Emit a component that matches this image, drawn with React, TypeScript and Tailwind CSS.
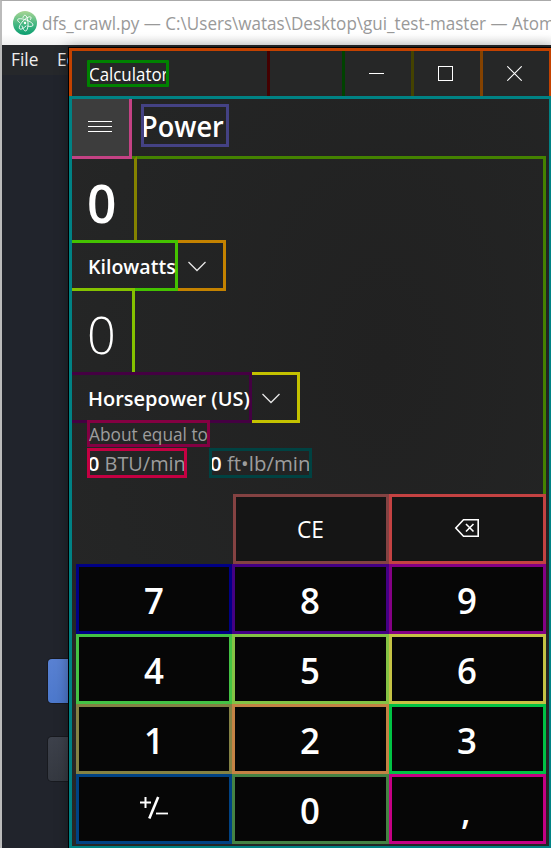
import React from "react";

type TextProps = { children: React.ReactNode; className?: string };

const Label = ({ children, className = "" }: TextProps) => (
  <span className={`inline-block origin-left whitespace-pre ${className}`}>{children}</span>
);

const Chevron = () => (
  <svg width="19" height="12" viewBox="0 0 19 12" fill="none" stroke="#e6e6e6" strokeWidth="1.3">
    <path d="M1.5 2 10 10.5 18.5 2" />
  </svg>
);

const keys = [
  { label: "7", frame: "border-[#000084]" },
  { label: "8", frame: "border-[#440084]" },
  { label: "9", frame: "border-[#840084]" },
  { label: "4", frame: "border-[#44c244]" },
  { label: "5", frame: "border-[#84c244]" },
  { label: "6", frame: "border-[#c4c244]" },
  { label: "1", frame: "border-[#848244]" },
  { label: "2", frame: "border-[#c48244]" },
  { label: "3", frame: "border-[#00c244]" },
  { label: "±", frame: "border-[#004284]" },
  { label: "0", frame: "border-[#448244]" },
  { label: ",", frame: "border-[#c40084] pr-[3px]" },
];

const PlusMinus = () => (
  <svg className="mb-1" width="30" height="24" viewBox="0 0 30 24" fill="none" stroke="#fff">
    <path d="M1 6.5H12M6.5 1V12" strokeWidth="2" />
    <path d="M10.3 22.5 19.2 1" strokeWidth="2.6" />
    <path d="M17 17.5H29" strokeWidth="1.8" />
  </svg>
);

const AtomLogo = () => (
  <svg className="shrink-0" width="24" height="24" viewBox="0 0 24 24" fill="none">
    <defs>
      <linearGradient id="atom" x1="0" y1="0" x2="0" y2="1">
        <stop offset="0" stopColor="#a9d694" />
        <stop offset="0.55" stopColor="#45b782" />
        <stop offset="1" stopColor="#0a9e70" />
      </linearGradient>
    </defs>
    <circle cx="12" cy="12" r="12" fill="url(#atom)" />
    <g stroke="#fff" strokeWidth="0.9" strokeLinecap="round">
      <path d="M6.5 11.5C3.5 9.5 4 7.5 7.5 7.7 12 8 20 11 20 14 20 15.5 17.500 15.800 15 15.200" />
      <path d="M10 6.500C10.500 4 12.500 3.200 13.800 6 15.500 9.500 15.500 17 13.500 19.500 12 21 10 18.500 9 15" />
      <path d="M17.500 8.500C19 6 17.500 5 15 6.300 10.500 8.500 5.500 14.500 6.300 17.300 7 19.500 10.500 17.500 13 15" />
    </g>
    <circle cx="12" cy="12" r="1.2" fill="#fff" />
  </svg>
);

function TitleBar() {
  return (
    <div className="flex h-12 border-x-[3px] border-t-[3px] border-[#c44200] bg-[#262727]">
      <div className="w-[195px] shrink-0 pt-[9px] pl-[15px]">
        <div className="h-[27px] w-[82px] overflow-hidden rounded-[1px] border-[3px] border-[#008200]">
          <Label className="ml-[-1px] text-[17.5px] leading-[19px] scale-x-[0.965]">Calculator</Label>
        </div>
      </div>
      <div className="w-[75px] shrink-0 border-l-[3px] border-[#440000]" />
      <div className="flex w-[69px] shrink-0 items-center justify-center border-l-[3px] border-[#004200] pr-[3px]">
        <div className="h-px w-[15px] bg-white" />
      </div>
      <div className="flex w-[69px] shrink-0 items-center justify-center border-l-[3px] border-[#444200] pr-[3px]">
        <div className="size-[15px] border border-white" />
      </div>
      <div className="flex w-[69px] shrink-0 items-center justify-center border-l-[3px] border-[#844200] pr-[3px]">
        <svg width="15" height="15" viewBox="0 0 15 15" stroke="#fff" strokeWidth="1.1">
          <path d="M.3.3 14.7 14.7M14.7.3.3 14.7" />
        </svg>
      </div>
    </div>
  );
}

function Header() {
  return (
    <div className="flex h-[57px]">
      <div className="flex h-[60px] w-[60px] flex-col gap-1 border-r-[3px] border-b-[3px] border-[#c44284] bg-[#3d3d3d] pt-[22px] pl-4">
        <div className="h-px w-6 bg-white" />
        <div className="h-px w-6 bg-white" />
        <div className="h-px w-6 bg-white" />
      </div>
      <div className="mt-[5px] ml-[9px] h-[43px] w-[88px] overflow-hidden border-[3px] border-[#444284]">
        <Label className="ml-[-3px] text-[28px] leading-[39px] font-semibold scale-x-[0.97]">Power</Label>
      </div>
    </div>
  );
}

function Converter() {
  return (
    <div className="h-[338px] w-[474px] border-t-[3px] border-r-[3px] border-[#448200]">
      <div className="mt-[-3px] flex h-[84px] w-[65px] items-center border-t-[3px] border-r-[3px] border-t-transparent border-r-[#848200] pt-[6px] pl-[15px]">
        <Label className="text-[52px] leading-[60px] font-semibold scale-x-[0.99]">0</Label>
      </div>
      <div className="flex h-[51px]">
        <div className="w-[106px] border-y-[3px] border-r-[3px] border-[#44c200] pl-4">
          <Label className="text-[20.5px] leading-[46px] font-semibold scale-x-[0.955]">Kilowatts</Label>
        </div>
        <div className="flex w-12 items-center border-y-[3px] border-r-[3px] border-[#c48200] pl-[9px]">
          <Chevron />
        </div>
      </div>
      <div className="relative mt-[-3px] flex h-[84px] w-[63px] items-center border-t-[3px] border-r-[3px] border-[#84c200] pt-[5px] pl-[15px]">
        <Label className="text-[52px] leading-[60px] font-light scale-x-[0.97]">0</Label>
      </div>
      <div className="flex h-[51px]">
        <div className="w-[180px] border-y-[3px] border-r-[3px] border-[#440042] pl-4">
          <Label className="text-[20.5px] leading-[46px] font-semibold scale-x-[0.975]">Horsepower (US)</Label>
        </div>
        <div className="flex w-12 items-center border-y-[3px] border-r-[3px] border-[#c4c200] pl-[9px]">
          <Chevron />
        </div>
      </div>
      <div className="relative mt-[-3px] ml-[15px] h-[27px] w-[123px] border-[3px] border-[#840042] text-[#9d9d9d]">
        <Label className="ml-[-1px] text-[18px] leading-[19px] scale-x-[0.96]">About equal to</Label>
      </div>
      <div className="mt-px ml-[15px] flex gap-[22px] text-[20px] leading-[26px] text-[#9d9d9d]">
        <div className="h-[30px] w-[100px] overflow-hidden border-[3px] border-[#c40042]">
          <Label className="ml-[-2px] scale-x-[0.995]"><span className="font-semibold text-white">0</span> BTU/min</Label>
        </div>
        <div className="h-[30px] w-[103px] overflow-hidden border-[3px] border-[#004242]">
          <Label className="ml-[-2px] scale-x-[1.02]"><span className="font-semibold text-white">0</span> ft•lb/min</Label>
        </div>
      </div>
    </div>
  );
}

function Keypad() {
  return (
    <div className="ml-1 w-[470px]">
      <div className="flex h-[70px] pl-[157px]">
        <div className="flex w-[156px] items-center justify-center border-[3px] border-[#844242] bg-[#151515] pt-[2px] text-[23.5px]">
          <Label className="origin-center scale-x-[0.97]">CE</Label>
        </div>
        <div className="flex w-[157px] items-center justify-center border-[3px] border-[#c44242] bg-[#151515] pr-[2px] pb-[2px]">
          <svg width="26" height="20" viewBox="0 0 26 20" fill="none" stroke="#fff" strokeWidth="1.6">
            <path d="M9.5 1.8H24.2V18.2H9.5L1.8 10ZM12 6 19.5 13.5M19.5 6 12 13.5" />
          </svg>
        </div>
      </div>
      <div className="grid grid-cols-[156px_157px_157px]">
        {keys.map(({ label, frame }) => (
          <div key={label} className={`flex h-[70px] items-center justify-center border-[3px] bg-[#060606] pt-[2px] text-[35.5px] leading-[60px] font-semibold ${frame}`}>
            {label === "±" ? <PlusMinus /> : <Label className="origin-center scale-x-[0.98]">{label}</Label>}
          </div>
        ))}
      </div>
    </div>
  );
}

export default function App() {
  return (
    <div className="relative h-[848px] w-[551px] overflow-hidden border-t border-l-2 border-t-[#aaa] border-l-[#bbb] bg-[#21242c] font-['Open_Sans','Noto_Sans',sans-serif]">
      <div className="flex h-11 items-center gap-[5px] bg-linear-to-b from-white from-75% to-[#f0f0f0] pl-[11px] text-[19px] text-[#999]">
        <AtomLogo />
        <Label className="scale-x-[0.898]">dfs_crawl.py — C:\Users\watas\Desktop\gui_test-master — Atom</Label>
      </div>
      <div className="flex h-[30px] gap-[17px] bg-[#26282b] pl-[9px] text-[18px] leading-[29px] text-[#eee]">
        <Label className="scale-x-[0.96]">File</Label>
        <Label className="scale-x-[0.96]">Edit</Label>
      </div>
      <div className="mt-[584px] ml-[46px] h-[44px] w-12 rounded bg-linear-to-b from-[#5981d2] to-[#4c78cc] ring-1 ring-[#181a1f]" />
      <div className="mt-[34px] ml-[46px] h-[44px] w-12 rounded bg-linear-to-b from-[#3d414b] to-[#353941] ring-1 ring-[#181a1f]" />

      <div className="absolute top-[46px] left-[66px] w-[484px] border-t border-l border-black text-white shadow-[0_0_12px_rgba(0,0,0,0.35)]">
        <TitleBar />
        <div className="h-[753px] border-[3px] border-[#008284] bg-[radial-gradient(ellipse_at_65%_35%,#212121_0%,#242525_65%,#272727_100%)]">
          <Header />
          <Converter />
          <Keypad />
        </div>
      </div>
    </div>
  );
}
